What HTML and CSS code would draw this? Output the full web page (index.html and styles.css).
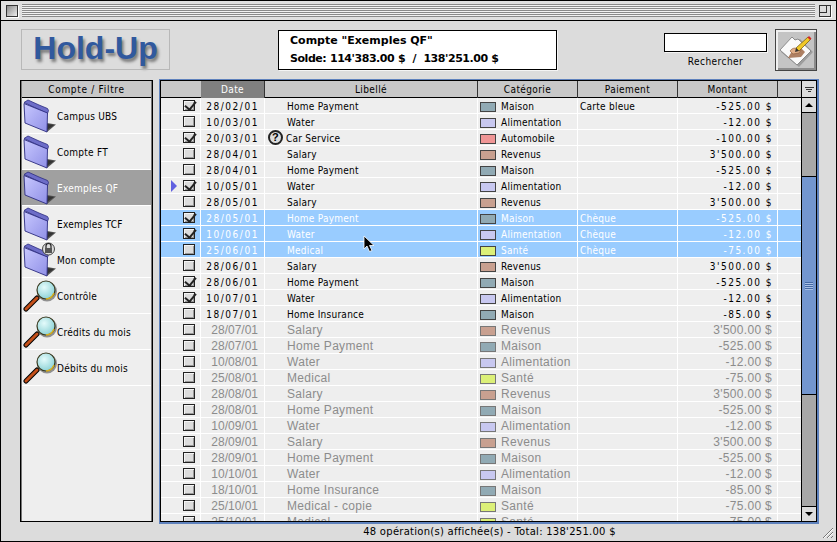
FILE: index.html
```html
<!DOCTYPE html>
<html lang="fr">
<head>
<meta charset="utf-8">
<title>Hold-Up</title>
<link rel="stylesheet" href="styles.css">
</head>
<body>
<svg class="defs" width="0" height="0" aria-hidden="true">
  <defs>
    <linearGradient id="fg" x1="0" y1="0" x2="1" y2="1"><stop offset="0" stop-color="#c8c8ff"/><stop offset="1" stop-color="#8f8fe6"/></linearGradient>
    <radialGradient id="lens" cx=".4" cy=".35" r=".7"><stop offset="0" stop-color="#e4fbfb"/><stop offset="1" stop-color="#88d0d4"/></radialGradient>
    <symbol id="folder" viewBox="0 0 34 34">
      <path d="M24 24l9 1.500-9 7.500z" fill="#555"/>
      <path d="M24 25l7 1-7 5z" fill="#333"/>
      <path d="M1 3.500L5 1l11 5 8.500 3.500 1 2-1 3z" fill="#6d6dc8" stroke="#2b2b80" stroke-width=".8"/>
      <path d="M1 4.500L24.500 14 24 33 2 24z" fill="url(#fg)" stroke="#2b2b80" stroke-width=".9"/>
    </symbol>
    <symbol id="loupe" viewBox="0 0 34 34">
      <path d="M14 19L3 30" stroke="#000" stroke-width="5" stroke-linecap="round"/>
      <path d="M14 19L3 30" stroke="#c4501a" stroke-width="3" stroke-linecap="round"/>
      <circle cx="24" cy="12.500" r="10" fill="#444" opacity=".55"/>
      <circle cx="23" cy="11" r="9" fill="url(#lens)" stroke="#3a3a20" stroke-width="1.200"/>
      <path d="M31 14a9 9 0 0 1-8 6" fill="none" stroke="#d8b020" stroke-width="1.500"/>
    </symbol>
  </defs>
</svg>
<div class="window">
  <div class="titlebar">
    <span class="closebox"></span>
    <span class="stripes"></span>
    <span class="zoombox"><i></i></span>
  </div>
  <div class="content">
    <header class="top">
      <div class="logo">Hold-Up</div>
      <div class="account">
        <div>Compte "Exemples QF"</div>
        <div class="balance">Solde: 114'383.00 $ &nbsp;/&nbsp; 138'251.00 $</div>
      </div>
      <div class="search">
        <div class="search-box"></div>
        <div class="search-label">Rechercher</div>
      </div>
      <button class="note-btn" aria-label="Note">
        <svg width="36" height="36" viewBox="0 0 36 36">
          <path d="M2 19L15 6l3 2 3-2 13 13-14 15z" fill="#555" opacity=".35" transform="translate(1 1)"/>
          <path d="M2 18L14 5l3 3 3-1 13 12-14 14z" fill="#fafafa" stroke="#777" stroke-width=".8"/>
          <path d="M10 26l13-1 4-5-4-4-9 3z" fill="#a06a48" opacity=".85"/>
          <path d="M12 19c3-4 6-3 8-2l3 1-2 3-6 1z" fill="#e0ae88" stroke="#8a5a3a" stroke-width=".6"/>
          <path d="M18 16L30 5l2.500 2.500L21 19z" fill="#f0c828" stroke="#6a5210" stroke-width=".7"/>
          <path d="M29.500 5.500l1.500-1.500 2.500 2.500-1.500 1.500z" fill="#d02828"/>
          <path d="M18 16l3 3-4 1z" fill="#333"/>
        </svg>
      </button>
    </header>
    <main class="panels">
      <aside class="sidebar">
        <div class="side-head">Compte / Filtre</div>
        <div class="side-item"><svg class="ic"><use href="#folder"/></svg><span>Campus UBS</span></div>
        <div class="side-item"><svg class="ic"><use href="#folder"/></svg><span>Compte FT</span></div>
        <div class="side-item current"><svg class="ic"><use href="#folder"/></svg><span>Exemples QF</span></div>
        <div class="side-item"><svg class="ic"><use href="#folder"/></svg><span>Exemples TCF</span></div>
        <div class="side-item locked"><svg class="ic"><use href="#folder"/></svg><span>Mon compte</span>
          <svg class="lock" width="13" height="15" viewBox="0 0 13 15"><circle cx="6.500" cy="8" r="6" fill="#ddd" stroke="#444"/><path d="M4 7V5a2.500 2.500 0 0 1 5 0v2" fill="none" stroke="#222" stroke-width="1.200"/><rect x="3" y="7" width="7" height="5" fill="#555"/></svg>
        </div>
        <div class="side-item"><svg class="ic"><use href="#loupe"/></svg><span>Contrôle</span></div>
        <div class="side-item"><svg class="ic"><use href="#loupe"/></svg><span>Crédits du mois</span></div>
        <div class="side-item"><svg class="ic"><use href="#loupe"/></svg><span>Débits du mois</span></div>
      </aside>
      <section class="frame">
        <div class="inner">
          <div class="listing">
            <div class="thead">
              <span></span><span class="active">Date</span><span>Libellé</span><span>Catégorie</span><span>Paiement</span><span>Montant</span><span></span>
            </div>
            <div class="tbody">
              <div class="row"><span class="chk"><i class="box on"></i></span><span class="date">28/02/01</span><span class="lab">Home Payment</span><span class="cat"><i class="sw mai"></i>Maison</span><span class="pay">Carte bleue</span><span class="amt">-525.00 $</span><span></span></div>
              <div class="row"><span class="chk"><i class="box"></i></span><span class="date">10/03/01</span><span class="lab">Water</span><span class="cat"><i class="sw ali"></i>Alimentation</span><span class="pay"></span><span class="amt">-12.00 $</span><span></span></div>
              <div class="row"><span class="chk"><i class="box on"></i></span><span class="date">20/03/01</span><span class="lab help"><i class="q">?</i>Car Service</span><span class="cat"><i class="sw aut"></i>Automobile</span><span class="pay"></span><span class="amt">-100.00 $</span><span></span></div>
              <div class="row"><span class="chk"><i class="box"></i></span><span class="date">28/04/01</span><span class="lab">Salary</span><span class="cat"><i class="sw rev"></i>Revenus</span><span class="pay"></span><span class="amt">3'500.00 $</span><span></span></div>
              <div class="row"><span class="chk"><i class="box"></i></span><span class="date">28/04/01</span><span class="lab">Home Payment</span><span class="cat"><i class="sw mai"></i>Maison</span><span class="pay"></span><span class="amt">-525.00 $</span><span></span></div>
              <div class="row"><span class="chk"><b class="mark"></b><i class="box on"></i></span><span class="date">10/05/01</span><span class="lab">Water</span><span class="cat"><i class="sw ali"></i>Alimentation</span><span class="pay"></span><span class="amt">-12.00 $</span><span></span></div>
              <div class="row"><span class="chk"><i class="box"></i></span><span class="date">28/05/01</span><span class="lab">Salary</span><span class="cat"><i class="sw rev"></i>Revenus</span><span class="pay"></span><span class="amt">3'500.00 $</span><span></span></div>
              <div class="row sel"><span class="chk"><i class="box on"></i></span><span class="date">28/05/01</span><span class="lab">Home Payment</span><span class="cat"><i class="sw mai"></i>Maison</span><span class="pay">Chèque</span><span class="amt">-525.00 $</span><span></span></div>
              <div class="row sel"><span class="chk"><i class="box on"></i></span><span class="date">10/06/01</span><span class="lab">Water</span><span class="cat"><i class="sw ali"></i>Alimentation</span><span class="pay">Chèque</span><span class="amt">-12.00 $</span><span></span></div>
              <div class="row sel"><span class="chk"><i class="box"></i></span><span class="date">25/06/01</span><span class="lab">Medical</span><span class="cat"><i class="sw san"></i>Santé</span><span class="pay">Chèque</span><span class="amt">-75.00 $</span><span></span></div>
              <div class="row"><span class="chk"><i class="box"></i></span><span class="date">28/06/01</span><span class="lab">Salary</span><span class="cat"><i class="sw rev"></i>Revenus</span><span class="pay"></span><span class="amt">3'500.00 $</span><span></span></div>
              <div class="row"><span class="chk"><i class="box on"></i></span><span class="date">28/06/01</span><span class="lab">Home Payment</span><span class="cat"><i class="sw mai"></i>Maison</span><span class="pay"></span><span class="amt">-525.00 $</span><span></span></div>
              <div class="row"><span class="chk"><i class="box on"></i></span><span class="date">10/07/01</span><span class="lab">Water</span><span class="cat"><i class="sw ali"></i>Alimentation</span><span class="pay"></span><span class="amt">-12.00 $</span><span></span></div>
              <div class="row"><span class="chk"><i class="box"></i></span><span class="date">18/07/01</span><span class="lab">Home Insurance</span><span class="cat"><i class="sw mai"></i>Maison</span><span class="pay"></span><span class="amt">-85.00 $</span><span></span></div>
              <div class="row fut"><span class="chk"><i class="box"></i></span><span class="date">28/07/01</span><span class="lab">Salary</span><span class="cat"><i class="sw rev"></i>Revenus</span><span class="pay"></span><span class="amt">3'500.00 $</span><span></span></div>
              <div class="row fut"><span class="chk"><i class="box"></i></span><span class="date">28/07/01</span><span class="lab">Home Payment</span><span class="cat"><i class="sw mai"></i>Maison</span><span class="pay"></span><span class="amt">-525.00 $</span><span></span></div>
              <div class="row fut"><span class="chk"><i class="box"></i></span><span class="date">10/08/01</span><span class="lab">Water</span><span class="cat"><i class="sw ali"></i>Alimentation</span><span class="pay"></span><span class="amt">-12.00 $</span><span></span></div>
              <div class="row fut"><span class="chk"><i class="box"></i></span><span class="date">25/08/01</span><span class="lab">Medical</span><span class="cat"><i class="sw san"></i>Santé</span><span class="pay"></span><span class="amt">-75.00 $</span><span></span></div>
              <div class="row fut"><span class="chk"><i class="box"></i></span><span class="date">28/08/01</span><span class="lab">Salary</span><span class="cat"><i class="sw rev"></i>Revenus</span><span class="pay"></span><span class="amt">3'500.00 $</span><span></span></div>
              <div class="row fut"><span class="chk"><i class="box"></i></span><span class="date">28/08/01</span><span class="lab">Home Payment</span><span class="cat"><i class="sw mai"></i>Maison</span><span class="pay"></span><span class="amt">-525.00 $</span><span></span></div>
              <div class="row fut"><span class="chk"><i class="box"></i></span><span class="date">10/09/01</span><span class="lab">Water</span><span class="cat"><i class="sw ali"></i>Alimentation</span><span class="pay"></span><span class="amt">-12.00 $</span><span></span></div>
              <div class="row fut"><span class="chk"><i class="box"></i></span><span class="date">28/09/01</span><span class="lab">Salary</span><span class="cat"><i class="sw rev"></i>Revenus</span><span class="pay"></span><span class="amt">3'500.00 $</span><span></span></div>
              <div class="row fut"><span class="chk"><i class="box"></i></span><span class="date">28/09/01</span><span class="lab">Home Payment</span><span class="cat"><i class="sw mai"></i>Maison</span><span class="pay"></span><span class="amt">-525.00 $</span><span></span></div>
              <div class="row fut"><span class="chk"><i class="box"></i></span><span class="date">10/10/01</span><span class="lab">Water</span><span class="cat"><i class="sw ali"></i>Alimentation</span><span class="pay"></span><span class="amt">-12.00 $</span><span></span></div>
              <div class="row fut"><span class="chk"><i class="box"></i></span><span class="date">18/10/01</span><span class="lab">Home Insurance</span><span class="cat"><i class="sw mai"></i>Maison</span><span class="pay"></span><span class="amt">-85.00 $</span><span></span></div>
              <div class="row fut"><span class="chk"><i class="box"></i></span><span class="date">25/10/01</span><span class="lab">Medical - copie</span><span class="cat"><i class="sw san"></i>Santé</span><span class="pay"></span><span class="amt">-75.00 $</span><span></span></div>
              <div class="row fut"><span class="chk"><i class="box"></i></span><span class="date">25/10/01</span><span class="lab">Medical</span><span class="cat"><i class="sw san"></i>Santé</span><span class="pay"></span><span class="amt">-75.00 $</span><span></span></div>
            </div>
          </div>
          <div class="scroll">
            <div class="sort"><i></i><i></i><i></i></div>
            <div class="arrow up"></div>
            <div class="track"><div class="thumb"><span class="grip"></span></div></div>
            <div class="arrow down"></div>
          </div>
        </div>
        <svg class="cursor" width="13" height="18" viewBox="0 0 13 18"><path d="M1 1v13l3-3 2.500 5.500 2.500-1L6.500 10.500H11z" fill="#000" stroke="#fff" stroke-width=".8"/></svg>
      </section>
    </main>
    <footer class="status">48 opération(s) affichée(s) - Total: 138'251.00 $</footer>
  </div>
  <svg class="grow" width="14" height="14" viewBox="0 0 14 14"><path d="M13 3L3 13M13 7l-6 6M13 11l-2 2" stroke="#777" fill="none"/><path d="M13 4L4 13M13 8l-5 5" stroke="#fff" fill="none"/></svg>
</div>
</body>
</html>
```
FILE: styles.css
```css
* { box-sizing: border-box; }
html, body { margin: 0; padding: 0; }
body { width: 837px; height: 542px; overflow: hidden; background: #dcdcdc; font-family: "DejaVu Sans", sans-serif; font-size: 10px; color: #000; }
.defs { position: absolute; }
.window { position: relative; width: 837px; height: 542px; border: 1px solid #000; background: #dcdcdc; display: flex; flex-direction: column; overflow: hidden; }

.titlebar { height: 20px; flex: none; display: flex; align-items: center; gap: 4px; padding: 0 5px; border-bottom: 1px solid #000; background: #e0e0e0; }
.closebox { width: 12px; height: 12px; flex: none; border: 1px solid #333; background: linear-gradient(135deg, #888, #eee); box-shadow: 1px 1px 0 #fff; }
.stripes { flex: 1; height: 13px; background: repeating-linear-gradient(to bottom, #8a8a8a 0 1px, #f2f2f2 1px 2px); }
.zoombox { position: relative; width: 12px; height: 12px; flex: none; border: 1px solid #333; background: #ddd; box-shadow: 1px 1px 0 #fff; }
.zoombox i { display: block; width: 7px; height: 7px; border-right: 1px solid #333; border-bottom: 1px solid #333; }

.content { flex: 1; display: flex; flex-direction: column; min-height: 0; }
.top { height: 58px; flex: none; display: flex; align-items: flex-start; padding: 8px 0 0 20px; }
.logo { width: 149px; height: 41px; border: 1px solid #f4f4f4; border-right-color: #aaa; border-top-color: #aaa; outline: 1px solid #b8b8b8; outline-offset: -1px; text-align: center; font: bold 32px/37px "Liberation Sans", sans-serif; color: #31599e; text-shadow: 2px 3px 3px rgba(0,0,0,.45); }
.account { width: 279px; height: 40px; margin: 1px 0 0 108px; border: 1px solid #000; background: #fff; padding: 1px 0 0 11px; font: bold 11px/18px "DejaVu Sans", sans-serif; box-shadow: 1px 1px 0 #f4f4f4; white-space: nowrap; }
.balance { letter-spacing: -.45px; word-spacing: .3px; }
.search { width: 103px; margin: 4px 0 0 107px; text-align: center; }
.search-box { height: 19px; border: 1px solid #000; background: #fff; box-shadow: 1px 1px 0 #f4f4f4; }
.search-label { margin-top: 3px; line-height: 14px; font-family: "DejaVu Sans Condensed", "DejaVu Sans", sans-serif; letter-spacing: .45px; }
.note-btn { width: 42px; height: 42px; margin: 0 0 0 8px; padding: 0; display: flex; align-items: center; justify-content: center; border: 1px solid #444; background: #c4c4c4; box-shadow: inset 2px 2px 0 #f0f0f0, inset -2px -2px 0 #8c8c8c; }

.panels { flex: none; height: 445px; display: flex; align-items: flex-start; padding-left: 19px; }
.sidebar { position: relative; width: 133px; height: 442px; margin-top: 1px; border: 1px solid #000; box-shadow: inset 1px 0 0 #777, inset -1px 0 0 #777; background: #eeeeee; font-family: "DejaVu Sans Condensed", "DejaVu Sans", sans-serif; padding: 0 1px; }
.side-head { height: 17px; border-bottom: 1px solid #000; background: #c8c8c8; text-align: center; line-height: 17px; letter-spacing: .7px; }
.side-item { position: relative; height: 36px; display: flex; align-items: center; gap: 0; padding: 0 0 0 1px; border-bottom: 1px solid #fff; letter-spacing: .25px; }
.side-item span { position: relative; top: 1px; }
.ic { width: 34px; height: 34px; flex: none; }
.current { background: #a0a0a0; color: #fff; }
.lock { position: absolute; left: 20px; top: -1px; }

.frame { position: relative; width: 660px; height: 445px; margin-left: 6px; border: solid #5f82bd; border-width: 1px 2px 2px 1px; }
.inner { width: 100%; height: 100%; border: 1px solid #000; display: flex; overflow: hidden; }
.listing { width: 640px; flex: none; display: flex; flex-direction: column; min-height: 0; }
.thead, .row { display: grid; grid-template-columns: 40px 64px 213px 100px 100px 100px 23px; }
.thead { height: 17px; flex: none; background: #c8c8c8; border-bottom: 1px solid #000; text-align: center; line-height: 17px; font-family: "DejaVu Sans Condensed", "DejaVu Sans", sans-serif; letter-spacing: .4px; }
.thead span { border-right: 1px solid #333; }
.thead span:first-child { border-right: 0; }
.thead .active { background: #808080; color: #fff; }
.thead span:last-child { border-right: 0; }
.tbody { flex: 1; overflow: hidden; background: #eee; }
.row { height: 16px; background: #eeeeee; border-bottom: 1px solid #fff; line-height: 15px; white-space: nowrap; font-family: "DejaVu Sans Condensed", "DejaVu Sans", sans-serif; letter-spacing: .25px; }
.row > span { border-right: 1px solid #fff; overflow: hidden; padding-top: 1px; }
.row > span:last-child { border-right: 0; }
.row > .chk { position: relative; padding: 0 0 0 22px; border-right: 1px solid #fff; }
.box { position: relative; display: block; width: 12px; height: 11px; margin-top: 2px; background: #dcdcdc; border: 1px solid #222; box-shadow: inset 1px 1px 0 #f4f4f4, inset -1px -1px 0 #999; }
.on::after { content: ""; position: absolute; left: 3px; top: -2px; width: 5px; height: 9px; border: solid #222; border-width: 0 2px 2px 0; transform: rotate(40deg); }
.mark { position: absolute; left: 10px; top: 2px; width: 0; height: 0; border-left: 6px solid #6060e0; border-top: 6px solid transparent; border-bottom: 6px solid transparent; }
.date { text-align: right; padding-right: 5px; letter-spacing: 1.55px; }
.lab { padding-left: 22px; }
.help { position: relative; padding-left: 21px; }
.q { position: absolute; left: 3px; top: 0; width: 15px; height: 15px; border: 2px solid #222; border-radius: 50%; font: bold 11px/11px "Liberation Sans", sans-serif; text-align: center; background: #ddd; }
.row > .cat { display: flex; align-items: flex-start; padding-left: 2px; }
.sw { width: 16px; height: 10px; flex: none; margin: 3px 5px 0 0; border: 1px solid #444; }
.mai { background: #91aab4; }
.ali { background: #c8c8f0; }
.aut { background: #f09696; }
.rev { background: #c8a090; }
.san { background: #dcf078; }
.pay { padding-left: 2px; }
.amt { text-align: right; padding-right: 4px; letter-spacing: 1.5px; }
.sel { background: #99ccff; color: #fff; }
.fut { color: #8c8c8c; font: 12px/15px "Liberation Sans", sans-serif; letter-spacing: .3px; }
.fut .date { letter-spacing: 0; padding-right: 6px; }
.fut .amt { letter-spacing: .3px; padding-right: 5px; }
.fut .sw { border-color: #777; }

.scroll { width: 15px; flex: none; display: flex; flex-direction: column; border-left: 1px solid #000; }
.sort { height: 17px; flex: none; display: flex; flex-direction: column; align-items: center; justify-content: center; gap: 1px; background: #dcdcdc; border-bottom: 1px solid #000; }
.sort i { display: block; height: 1px; background: #333; }
.sort i:nth-child(1) { width: 9px; }
.sort i:nth-child(2) { width: 6px; }
.sort i:nth-child(3) { width: 3px; }
.arrow { position: relative; height: 15px; flex: none; background: #dcdcdc; }
.arrow::after { content: ""; position: absolute; left: 3px; top: 5px; border-left: 4px solid transparent; border-right: 4px solid transparent; }
.up { border-bottom: 1px solid #000; }
.up::after { border-bottom: 4px solid #000; }
.down { border-top: 1px solid #000; }
.down::after { border-top: 4px solid #000; }
.track { flex: 1; background: #a8a8a8; padding-top: 63px; }
.thumb { height: 219px; background: #7396cf; border: solid #000; border-width: 1px 0; display: flex; align-items: center; justify-content: center; }
.grip { width: 8px; height: 8px; background: repeating-linear-gradient(to bottom, #456aa6 0 1px, #a9c0e6 1px 2px); }
.cursor { position: absolute; left: 203px; top: 155px; }
.status { height: 17px; flex: none; text-align: center; padding-left: 142px; line-height: 15px; letter-spacing: .27px; }
.grow { position: absolute; right: 2px; bottom: 2px; }
```
